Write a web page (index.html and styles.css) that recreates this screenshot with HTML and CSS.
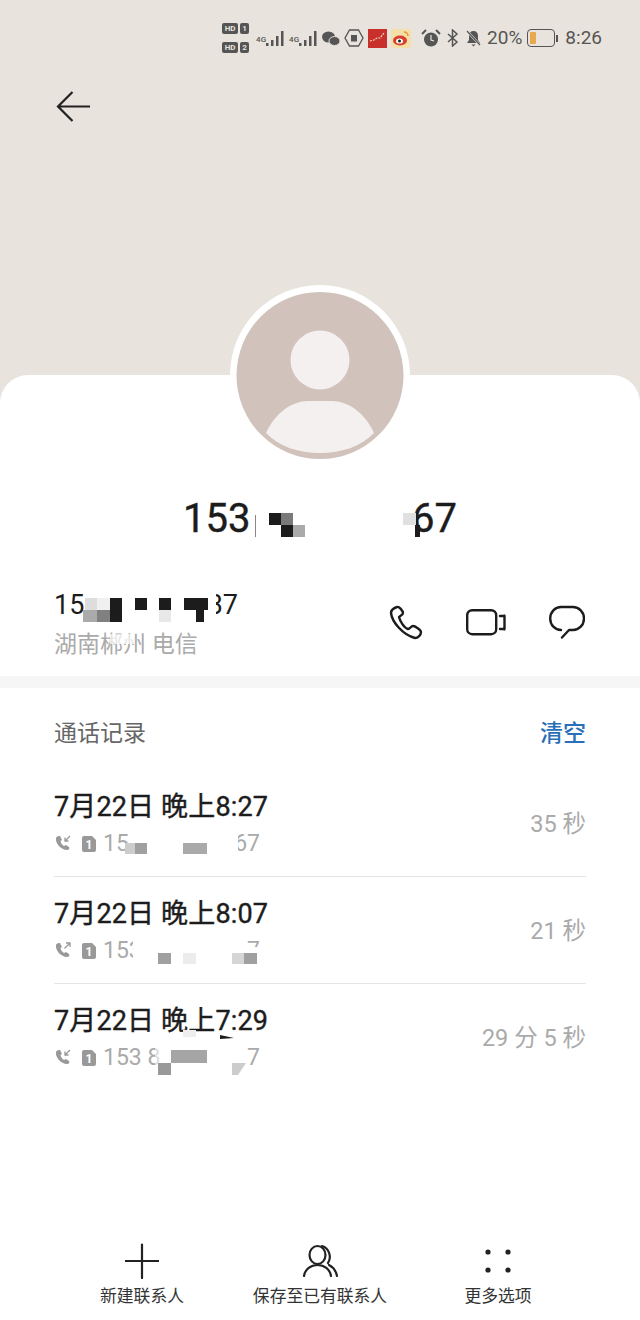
FILE: index.html
```html
<!DOCTYPE html>
<html lang="zh-CN">
<head>
<meta charset="UTF-8">
<meta name="viewport" content="width=device-width, initial-scale=1.0">
<title>通话详情</title>
<link rel="stylesheet" href="styles.css">
</head>
<body>
<div class="page">

  <div class="top">
    <div class="status">
      <div class="hd">
        <div class="hd-row"><span class="hd-tag">HD</span><span class="hd-num">1</span></div>
        <div class="hd-row"><span class="hd-tag">HD</span><span class="hd-num">2</span></div>
      </div>
      <div class="signal">
        <span class="net">4G</span>
        <svg width="18" height="17" viewBox="0 0 18 17"><path d="M0 13h2.500v3H0zM5 10h2.500v6H5zM10 6h2.500v10H10zM15 1h2.500v15H15z" fill="#555"/></svg>
      </div>
      <div class="signal">
        <span class="net">4G</span>
        <svg width="18" height="17" viewBox="0 0 18 17"><path d="M0 13h2.500v3H0zM5 10h2.500v6H5zM10 6h2.500v10H10zM15 1h2.500v15H15z" fill="#555"/></svg>
      </div>
      <svg class="wechat" width="18" height="15" viewBox="0 0 18 15"><ellipse cx="6.500" cy="6" rx="6.500" ry="5.500" fill="#555"/><ellipse cx="12.500" cy="10" rx="5.500" ry="4.500" fill="#555" stroke="#e8e3dc"/></svg>
      <svg width="20" height="18" viewBox="0 0 20 18"><path d="M5.500 1h9l4.500 8-4.500 8h-9L1 9z" fill="none" stroke="#555" stroke-width="1.300"/><path d="M7 6h6v6.500H7z" fill="#555"/></svg>
      <svg width="19" height="19" viewBox="0 0 19 19"><rect width="19" height="19" fill="#c9302c"/><path d="M2 12l4-1 3-2 3 0 4-5" fill="none" stroke="#f4d9c0" stroke-width="1.200" stroke-dasharray="2 1"/></svg>
      <svg width="20" height="19" viewBox="0 0 20 19"><rect width="20" height="19" rx="3" fill="#f5dfa8"/><ellipse cx="9" cy="11.500" rx="7" ry="5" fill="#d9402b"/><ellipse cx="8.500" cy="12" rx="3.500" ry="2.600" fill="#fff"/><circle cx="8.500" cy="12" r="1.500" fill="#222"/><path d="M13 3a4 4 0 0 1 4 4" fill="none" stroke="#e8912d" stroke-width="1.500"/></svg>
      <svg class="alarm" width="20" height="19" viewBox="0 0 20 19"><circle cx="10" cy="10.500" r="7" fill="#555"/><path d="M1 5l4-4M19 5l-4-4" stroke="#555" stroke-width="2"/><path d="M10 6v5l3 1" fill="none" stroke="#e8e3dc" stroke-width="1.200"/></svg>
      <svg class="bt" width="13" height="18" viewBox="0 0 13 18"><path d="M2 5l9 8-4.500 4V1l4.500 4-9 8" fill="none" stroke="#555" stroke-width="1.500"/></svg>
      <svg class="bell" width="17" height="17" viewBox="0 0 17 17"><path d="M8.500 1c3 0 4.500 2 4.500 5v4l2 3H2l2-3V6c0-3 1.500-5 4.500-5zM6.500 14.500h4L8.500 16.500z" fill="#555"/><path d="M2 1l13 14" stroke="#e8e3dc" stroke-width="2.500"/><path d="M2 1l13 14" stroke="#555" stroke-width="1.200"/></svg>
      <span class="pct">20%</span>
      <div class="battery"><div class="battery-body"><div class="battery-fill"></div></div><div class="battery-cap"></div></div>
      <span class="clock">8:26</span>
    </div>
    <svg class="back" width="35" height="32" viewBox="0 0 35 32"><path d="M34 15.500H2M16.500 1L2 15.500 16.500 30" fill="none" stroke="#222" stroke-width="2.200"/></svg>
  </div>

  <div class="card">
    <svg class="avatar" width="180" height="180" viewBox="0 0 180 180">
      <circle cx="90" cy="90" r="90" fill="#fff"/>
      <circle cx="90" cy="90.500" r="83.500" fill="#d1c2bb"/>
      <circle cx="90" cy="75" r="29.500" fill="#f4f0ef"/>
      <path d="M36 148C45 128 62 116 78 116H102C118 116 135 128 144 148C132 161 112 168 90 168C68 168 48 161 36 148Z" fill="#f4f0ef"/>
    </svg>

    <div class="name">
      <span>153</span><span>67</span>
      <svg class="mosaic" width="274" height="50" viewBox="183 494 274 50">
        <rect x="255" y="515" width="1" height="22" fill="#888"/>
        <rect x="269" y="513" width="12" height="12" fill="#1c1c1c"/>
        <rect x="281" y="513" width="12" height="12" fill="#7a7a7a"/>
        <rect x="281" y="525" width="12" height="12" fill="#1c1c1c"/>
        <rect x="293" y="525" width="12" height="12" fill="#aaa"/>
        <rect x="403" y="513" width="13" height="12" fill="#e0e0e0"/>
        <rect x="415" y="525" width="5" height="12" fill="#1c1c1c"/>
      </svg>
    </div>

    <div class="contact">
      <div class="contact-info">
        <div class="contact-num">
          <span>15</span><span>37</span>
          <svg class="mosaic" width="184" height="34" viewBox="54 588 184 34">
            <rect x="208" y="594" width="8" height="24" fill="#fff"/>
            <rect x="85" y="598" width="12" height="12" fill="#ddd"/>
            <rect x="97" y="598" width="13" height="12" fill="#f0f0f0"/>
            <rect x="110" y="598" width="12" height="24" fill="#1c1c1c"/>
            <rect x="83" y="610" width="14" height="12" fill="#aaa"/>
            <rect x="97" y="610" width="13" height="12" fill="#808080"/>
            <rect x="135" y="598" width="12" height="12" fill="#1c1c1c"/>
            <rect x="159" y="598" width="12" height="12" fill="#1c1c1c"/>
            <rect x="159" y="610" width="12" height="12" fill="#e8e8e8"/>
            <rect x="184" y="598" width="24" height="12" fill="#1c1c1c"/>
            <rect x="196" y="610" width="8" height="12" fill="#1c1c1c"/>
          </svg>
        </div>
        <div class="contact-loc">
          湖南郴州 电信
          <svg class="mosaic" width="144" height="30" viewBox="54 630 144 30">
            <rect x="110" y="634" width="24" height="10" fill="#fff" fill-opacity="0.7"/>
          </svg>
        </div>
      </div>
      <div class="contact-actions">
        <svg width="34" height="35" viewBox="0 0 34 35"><path d="M8 2C5 3 2 5 2 8C3 17 14 30 26 33C29 33 32 30 32 27C32 25 26 21 24 21C22 21 21 24 19 24C15 23 11 16 10 12C11 11 14 10 14 8C14 6 10 1 8 2Z" class="line-icon"/></svg>
        <svg width="40" height="27" viewBox="0 0 40 27"><rect x="1.200" y="1.200" width="29" height="24" rx="5" class="line-icon"/><path d="M34 7H37C38 7 38.500 6 38.500 7V20C38.500 21 38 20 37 20H34" class="line-icon"/></svg>
        <svg width="36" height="34" viewBox="0 0 36 34"><path d="M13 32.500L20 25H24C30 25 35 20 35 13.500C35 7 30 2 24 2H12C6 2 1.200 7 1.200 13.500C1.200 20 6 25 12 25" class="line-icon"/></svg>
      </div>
    </div>

    <div class="band"></div>

    <div class="log-head">
      <span class="log-title">通话记录</span>
      <span class="log-clear">清空</span>
    </div>

    <div class="log-list">
      <div class="log-row">
        <div class="log-main">
          <div class="log-time">7月22日 晚上8:27</div>
          <div class="log-sub">
            <svg class="call-icon" width="18" height="17" viewBox="0 0 18 17"><path d="M2 3C1 8 7 15 13 15C15 15 16 13 15 12L12 10L10 11C8 10 7 8 6.500 6L8 5L6 1C4 1 2.500 1.500 2 3Z" fill="#999"/><path d="M16 1L11 6M11 2.500V6H14.500" fill="none" stroke="#999" stroke-width="1.300"/></svg>
            <svg class="sim" width="14" height="16" viewBox="0 0 14 16"><path d="M2 0H10L14 4V14Q14 16 12 16H2Q0 16 0 14V2Q0 0 2 0Z" fill="#999"/><text x="7" y="13" text-anchor="middle" class="sim-text">1</text></svg>
            <div class="log-num">
              <span>15</span><span>67</span>
              <svg class="mosaic" width="157" height="30" viewBox="103 829 157 30">
                <rect x="232" y="832" width="6" height="22" fill="#fff"/>
                <rect x="125" y="843" width="10" height="11" fill="#ccc"/>
                <rect x="135" y="843" width="12" height="11" fill="#a0a0a0"/>
                <rect x="183" y="843" width="24" height="11" fill="#aaa"/>
              </svg>
            </div>
          </div>
        </div>
        <span class="log-dur">35 秒</span>
      </div>

      <div class="log-row">
        <div class="log-main">
          <div class="log-time">7月22日 晚上8:07</div>
          <div class="log-sub">
            <svg class="call-icon" width="18" height="17" viewBox="0 0 18 17"><path d="M2 3C1 8 7 15 13 15C15 15 16 13 15 12L12 10L10 11C8 10 7 8 6.500 6L8 5L6 1C4 1 2.500 1.500 2 3Z" fill="#999"/><path d="M10.500 6.500L16 1M12 1H16V5" fill="none" stroke="#999" stroke-width="1.300"/></svg>
            <svg class="sim" width="14" height="16" viewBox="0 0 14 16"><path d="M2 0H10L14 4V14Q14 16 12 16H2Q0 16 0 14V2Q0 0 2 0Z" fill="#999"/><text x="7" y="13" text-anchor="middle" class="sim-text">1</text></svg>
            <div class="log-num">
              <span>153</span><span>7</span>
              <svg class="mosaic" width="157" height="30" viewBox="103 936 157 30">
                <rect x="133" y="938" width="8" height="24" fill="#fff"/>
                <rect x="245" y="947" width="16" height="14" fill="#fff"/>
                <rect x="158" y="953" width="13" height="11" fill="#a0a0a0"/>
                <rect x="183" y="953" width="13" height="11" fill="#ececec"/>
                <rect x="232" y="953" width="12" height="11" fill="#d5d5d5"/>
                <rect x="244" y="953" width="13" height="11" fill="#a0a0a0"/>
              </svg>
            </div>
          </div>
        </div>
        <span class="log-dur">21 秒</span>
      </div>

      <div class="log-row log-row-last">
        <div class="log-main">
          <div class="log-time">7月22日 晚上7:29</div>
          <div class="log-sub">
            <svg class="call-icon" width="18" height="17" viewBox="0 0 18 17"><path d="M2 3C1 8 7 15 13 15C15 15 16 13 15 12L12 10L10 11C8 10 7 8 6.500 6L8 5L6 1C4 1 2.500 1.500 2 3Z" fill="#999"/><path d="M16 1L11 6M11 2.500V6H14.500" fill="none" stroke="#999" stroke-width="1.300"/></svg>
            <svg class="sim" width="14" height="16" viewBox="0 0 14 16"><path d="M2 0H10L14 4V14Q14 16 12 16H2Q0 16 0 14V2Q0 0 2 0Z" fill="#999"/><text x="7" y="13" text-anchor="middle" class="sim-text">1</text></svg>
            <div class="log-num">
              <span>153 8</span><span>7</span>
              <svg class="mosaic" width="157" height="34" viewBox="103 1043 157 34">
                <rect x="183" y="1030" width="13" height="7" fill="#eee"/>
                <path d="M220 1035L234 1038L220 1039Z" fill="#1c1c1c"/>
                <rect x="155" y="1046" width="8" height="22" fill="#fff" fill-opacity="0.6"/>
                <rect x="171" y="1050" width="36" height="13" fill="#a5a5a5"/>
                <rect x="158" y="1063" width="13" height="12" fill="#999"/>
                <path d="M232 1063H246L238 1075H232Z" fill="#ccc"/>
              </svg>
            </div>
          </div>
        </div>
        <span class="log-dur">29 分 5 秒</span>
      </div>
    </div>

    <div class="nav">
      <div class="nav-item">
        <svg width="34" height="36" viewBox="0 0 34 36"><path d="M17 1.500V35M0.500 18H33.500" class="nav-icon"/></svg>
        <span class="nav-label">新建联系人</span>
      </div>
      <div class="nav-item">
        <svg width="36" height="36" viewBox="0 0 36 36"><ellipse cx="15.500" cy="12" rx="8" ry="9" class="nav-icon"/><path d="M2 33C3 26 9 22 15.500 22C22 22 28 26 29 33M20 3C27 5 30 14 26 20M27 22C31 24 34 28 35 33" class="nav-icon"/></svg>
        <span class="nav-label">保存至已有联系人</span>
      </div>
      <div class="nav-item">
        <svg width="36" height="36" viewBox="0 0 36 36"><circle cx="8" cy="9" r="2.600" fill="#222"/><circle cx="28" cy="9" r="2.600" fill="#222"/><circle cx="8" cy="27" r="2.600" fill="#222"/><circle cx="28" cy="27" r="2.600" fill="#222"/></svg>
        <span class="nav-label">更多选项</span>
      </div>
    </div>
  </div>

</div>
</body>
</html>
```

FILE: styles.css
```css
body {
  margin: 0;
  font-family: Roboto, "Noto Sans CJK SC", sans-serif;
  background-color: #fff;
}

.page {
  display: flex;
  flex-direction: column;
  width: 640px;
  height: 1320px;
  overflow: hidden;
  background-color: #e8e3dc;
}

/* top area */
.top {
  flex: 0 0 375px;
  box-sizing: border-box;
  padding-top: 22px;
}

.status {
  display: flex;
  justify-content: flex-end;
  align-items: center;
  gap: 4px;
  height: 32px;
  padding-right: 38px;
  color: #555;
}

.hd {
  display: flex;
  flex-direction: column;
  gap: 8px;
  margin-right: 3px;
}

.hd-row {
  display: flex;
  gap: 2px;
}

.hd-tag,
.hd-num {
  height: 11px;
  line-height: 11px;
  border-radius: 2px;
  background-color: #555;
  color: #e8e3dc;
  font-size: 8px;
  font-weight: 700;
  text-align: center;
}

.hd-tag {
  width: 16px;
}

.hd-num {
  width: 9px;
}

.signal {
  display: flex;
  align-items: flex-end;
  justify-content: space-between;
  width: 28px;
  margin-right: 1px;
}

.net {
  align-self: flex-start;
  margin-top: 5px;
  font-size: 8px;
  font-weight: 500;
  line-height: 10px;
}

.alarm {
  margin-left: 6px;
}

.bt {
  margin-left: 1px;
}

.bell {
  margin-left: 2px;
}

.pct,
.clock {
  font-size: 19px;
  line-height: 24px;
}

.pct {
  margin-left: 1px;
}

.clock {
  margin-left: 3px;
}

.battery {
  display: flex;
  align-items: center;
  gap: 1px;
  margin-left: 1px;
}

.battery-body {
  box-sizing: border-box;
  width: 28px;
  height: 18px;
  padding: 2px;
  border: 1px solid #555;
  border-radius: 4px;
}

.battery-fill {
  width: 6px;
  height: 100%;
  border-radius: 1px;
  background-color: #e9a94a;
}

.battery-cap {
  width: 2px;
  height: 7px;
  background-color: #555;
}

.back {
  display: block;
  margin: 37px 0 0 56px;
}

/* white card */
.card {
  position: relative;
  flex: 1;
  display: flex;
  flex-direction: column;
  padding-top: 119px;
  border-radius: 28px 28px 0 0;
  background-color: #fff;
}

.avatar {
  position: absolute;
  top: -90px;
  left: 230px;
}

.mosaic {
  position: absolute;
  top: 0;
  left: 0;
  overflow: visible;
}

.name {
  position: relative;
  display: flex;
  justify-content: space-between;
  width: 274px;
  margin: 0 auto;
  font-size: 40px;
  line-height: 50px;
  color: #1c1c1c;
  -webkit-text-stroke: 0.4px #1c1c1c;
}

.contact {
  display: flex;
  justify-content: space-between;
  align-items: center;
  height: 72px;
  margin-top: 44px;
  padding: 0 55px 16px 54px;
}

.contact-num {
  position: relative;
  display: flex;
  justify-content: space-between;
  width: 184px;
  font-size: 27px;
  line-height: 34px;
  color: #1c1c1c;
}

.contact-loc {
  position: relative;
  margin-top: 8px;
  font-size: 23px;
  line-height: 30px;
  color: #aaa;
}

.contact-actions {
  display: flex;
  align-items: center;
  gap: 43px;
  margin-bottom: 4px;
}

.line-icon {
  fill: none;
  stroke: #1c1c1c;
  stroke-width: 2.4;
  stroke-linecap: round;
  stroke-linejoin: round;
}

.band {
  flex: 0 0 12px;
  background-color: #f6f6f6;
}

/* call log */
.log-head {
  display: flex;
  justify-content: space-between;
  align-items: center;
  height: 32px;
  padding: 27px 54px 23px;
  font-size: 23px;
}

.log-title {
  color: #666;
}

.log-clear {
  font-weight: 500;
  color: #2a6fb8;
}

.log-list {
  padding: 0 54px;
}

.log-row {
  display: flex;
  justify-content: space-between;
  align-items: center;
  height: 106px;
  border-bottom: 1px solid #e4e4e4;
}

.log-row-last {
  border-bottom: 0;
}

.log-time {
  margin-top: 1px;
  font-size: 27px;
  line-height: 36px;
  letter-spacing: 0.15px;
  color: #1c1c1c;
  -webkit-text-stroke: 0.4px #1c1c1c;
}

.log-sub {
  display: flex;
  align-items: center;
  height: 30px;
  margin-top: 4px;
}

.call-icon {
  margin-right: 10px;
}

.sim {
  margin-right: 7px;
}

.sim-text {
  font-size: 12px;
  font-weight: 700;
  fill: #fff;
}

.log-num {
  position: relative;
  display: flex;
  justify-content: space-between;
  width: 157px;
  font-size: 23px;
  line-height: 30px;
  color: #aaa;
}

.log-dur {
  margin-bottom: 2px;
  font-size: 23.500px;
  color: #aaa;
}

/* bottom actions */
.nav {
  display: grid;
  grid-template-columns: repeat(3, 178px);
  margin-top: auto;
  padding: 0 53px 12px;
}

.nav-item {
  display: flex;
  flex-direction: column;
  align-items: center;
  gap: 5px;
}

.nav-icon {
  fill: none;
  stroke: #222;
  stroke-width: 2.2;
  stroke-linecap: round;
}

.nav-label {
  font-size: 16.800px;
  line-height: 24px;
  color: #333;
  white-space: nowrap;
}
```
